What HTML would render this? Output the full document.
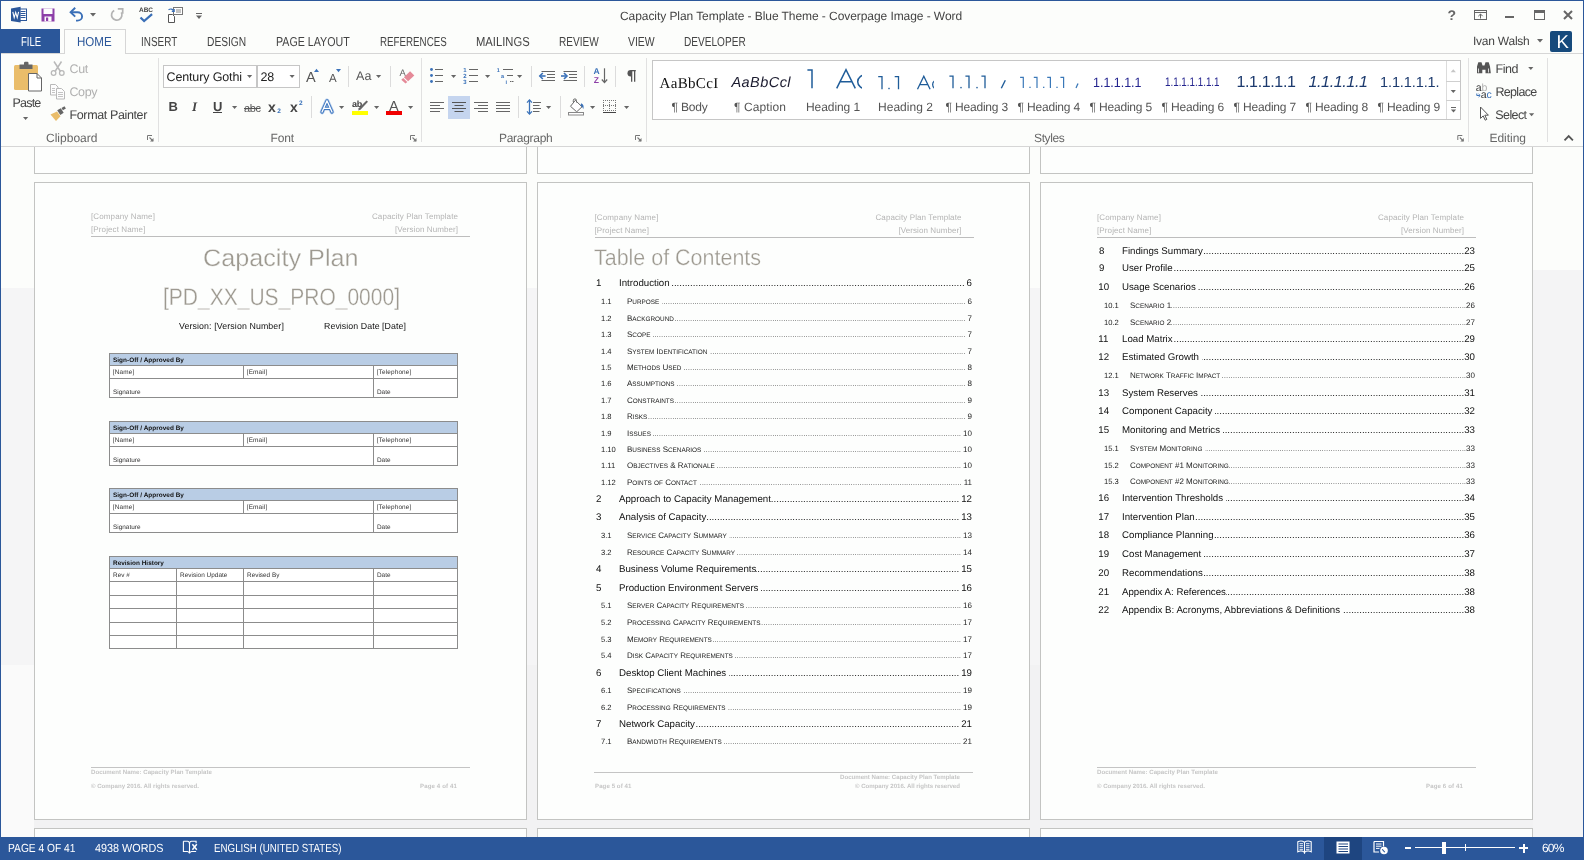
<!DOCTYPE html>
<html><head><meta charset="utf-8"><title>Capacity Plan Template - Word</title><style>
html,body{margin:0;padding:0;}
body{width:1584px;height:860px;overflow:hidden;background:#fcfdfb;font-family:"Liberation Sans",sans-serif;position:relative;}
.t{position:absolute;white-space:nowrap;font-family:"Liberation Sans",sans-serif;}
.r{position:absolute;}
#all{position:absolute;left:0;top:0;width:1584px;height:860px;will-change:transform;text-rendering:geometricPrecision;}
#win{position:absolute;left:0;top:0;width:1584px;height:860px;box-sizing:border-box;border:1px solid #2b579a;border-bottom:none;pointer-events:none;z-index:50;}
#doc{position:absolute;left:0;top:147px;width:1584px;height:690px;background:#fcfdfb;}
</style></head><body>
<div id="all">
<div id="doc"></div>
<div class="r" style="left:0px;top:288px;width:1533px;height:377px;background:#f5f5f6;"></div>
<div class="r" style="left:34px;top:665px;width:1499px;height:172px;background:#f2f2f3;"></div>
<div class="r" style="left:0px;top:665px;width:34px;height:172px;background:#fafafa;"></div>
<div class="r" style="left:1533px;top:270px;width:51px;height:567px;background:#f4f4f5;"></div>
<div class="r" style="left:34px;top:147px;width:493px;height:27px;background:#fdfefd;border:1px solid #c3c4c2;border-top:none;box-sizing:border-box;"></div>
<div class="r" style="left:34px;top:182px;width:493px;height:638px;background:#fdfefd;border:1px solid #c3c4c2;box-sizing:border-box;"></div>
<div class="r" style="left:34px;top:828px;width:493px;height:12px;background:#fdfefd;border:1px solid #c3c4c2;border-bottom:none;box-sizing:border-box;"></div>
<div class="r" style="left:537px;top:147px;width:493px;height:27px;background:#fdfefd;border:1px solid #c3c4c2;border-top:none;box-sizing:border-box;"></div>
<div class="r" style="left:537px;top:182px;width:493px;height:638px;background:#fdfefd;border:1px solid #c3c4c2;box-sizing:border-box;"></div>
<div class="r" style="left:537px;top:828px;width:493px;height:12px;background:#fdfefd;border:1px solid #c3c4c2;border-bottom:none;box-sizing:border-box;"></div>
<div class="r" style="left:1040px;top:147px;width:493px;height:27px;background:#fdfefd;border:1px solid #c3c4c2;border-top:none;box-sizing:border-box;"></div>
<div class="r" style="left:1040px;top:182px;width:493px;height:638px;background:#fdfefd;border:1px solid #c3c4c2;box-sizing:border-box;"></div>
<div class="r" style="left:1040px;top:828px;width:493px;height:12px;background:#fdfefd;border:1px solid #c3c4c2;border-bottom:none;box-sizing:border-box;"></div>
<div class="t" style="left:91px;top:212px;font-size:8px;line-height:10px;color:#b4b4b4;letter-spacing:0.126px;">[Company Name]</div>
<div class="t" style="left:91px;top:225px;font-size:8px;line-height:10px;color:#b4b4b4;letter-spacing:0.114px;">[Project Name]</div>
<div class="t" style="left:372px;top:212px;font-size:8px;line-height:10px;color:#b4b4b4;letter-spacing:0.096px;">Capacity Plan Template</div>
<div class="t" style="left:395px;top:225px;font-size:8px;line-height:10px;color:#b4b4b4;letter-spacing:0.075px;">[Version Number]</div>
<div class="r" style="left:91px;top:236px;width:379px;height:1px;background:#bdbdbd;"></div>
<div class="t" style="left:203px;top:245px;font-size:24px;line-height:28px;color:#9d9990;transform:scaleX(1.0502);transform-origin:0 50%;-webkit-text-stroke:0.3px #fdfefd;">Capacity Plan</div>
<div class="t" style="left:162.5px;top:284px;font-size:24px;line-height:28px;color:#9d9990;transform:scaleX(0.8751);transform-origin:0 50%;-webkit-text-stroke:0.3px #fdfefd;">[PD_XX_US_PRO_0000]</div>
<div class="t" style="left:179px;top:321px;font-size:8.8px;line-height:10px;color:#111;letter-spacing:0.111px;">Version: [Version Number]</div>
<div class="t" style="left:324px;top:321px;font-size:8.8px;line-height:10px;color:#111;letter-spacing:0.065px;">Revision Date [Date]</div>
<div class="r" style="left:109px;top:353px;width:349px;height:45px;background:#fff;border:1px solid #8c8c8c;box-sizing:border-box;"></div>
<div class="r" style="left:110px;top:354px;width:347px;height:11px;background:#b9cde5;"></div>
<div class="r" style="left:110px;top:365px;width:347px;height:1px;background:#8c8c8c;"></div>
<div class="r" style="left:110px;top:378px;width:347px;height:1px;background:#8c8c8c;"></div>
<div class="r" style="left:243px;top:365px;width:1px;height:13px;background:#8c8c8c;"></div>
<div class="r" style="left:373px;top:365px;width:1px;height:32px;background:#8c8c8c;"></div>
<div class="t" style="left:113px;top:357px;font-size:6.4px;line-height:7px;color:#111;letter-spacing:0.038px;font-weight:bold;">Sign-Off / Approved By</div>
<div class="t" style="left:112.7px;top:369px;font-size:6.4px;line-height:7px;color:#333;letter-spacing:0.195px;">[Name]</div>
<div class="t" style="left:246.7px;top:369px;font-size:6.4px;line-height:7px;color:#333;letter-spacing:0.177px;">[Email]</div>
<div class="t" style="left:376.7px;top:369px;font-size:6.4px;line-height:7px;color:#333;letter-spacing:0.155px;">[Telephone]</div>
<div class="t" style="left:113px;top:389px;font-size:6.4px;line-height:7px;color:#333;letter-spacing:0.012px;">Signature</div>
<div class="t" style="left:377px;top:389px;font-size:6.4px;line-height:7px;color:#333;letter-spacing:-0.005px;">Date</div>
<div class="r" style="left:109px;top:421px;width:349px;height:45px;background:#fff;border:1px solid #8c8c8c;box-sizing:border-box;"></div>
<div class="r" style="left:110px;top:422px;width:347px;height:11px;background:#b9cde5;"></div>
<div class="r" style="left:110px;top:433px;width:347px;height:1px;background:#8c8c8c;"></div>
<div class="r" style="left:110px;top:446px;width:347px;height:1px;background:#8c8c8c;"></div>
<div class="r" style="left:243px;top:433px;width:1px;height:13px;background:#8c8c8c;"></div>
<div class="r" style="left:373px;top:433px;width:1px;height:32px;background:#8c8c8c;"></div>
<div class="t" style="left:113px;top:425px;font-size:6.4px;line-height:7px;color:#111;letter-spacing:0.038px;font-weight:bold;">Sign-Off / Approved By</div>
<div class="t" style="left:112.7px;top:437px;font-size:6.4px;line-height:7px;color:#333;letter-spacing:0.195px;">[Name]</div>
<div class="t" style="left:246.7px;top:437px;font-size:6.4px;line-height:7px;color:#333;letter-spacing:0.177px;">[Email]</div>
<div class="t" style="left:376.7px;top:437px;font-size:6.4px;line-height:7px;color:#333;letter-spacing:0.155px;">[Telephone]</div>
<div class="t" style="left:113px;top:457px;font-size:6.4px;line-height:7px;color:#333;letter-spacing:0.012px;">Signature</div>
<div class="t" style="left:377px;top:457px;font-size:6.4px;line-height:7px;color:#333;letter-spacing:-0.005px;">Date</div>
<div class="r" style="left:109px;top:488px;width:349px;height:45px;background:#fff;border:1px solid #8c8c8c;box-sizing:border-box;"></div>
<div class="r" style="left:110px;top:489px;width:347px;height:11px;background:#b9cde5;"></div>
<div class="r" style="left:110px;top:500px;width:347px;height:1px;background:#8c8c8c;"></div>
<div class="r" style="left:110px;top:513px;width:347px;height:1px;background:#8c8c8c;"></div>
<div class="r" style="left:243px;top:500px;width:1px;height:13px;background:#8c8c8c;"></div>
<div class="r" style="left:373px;top:500px;width:1px;height:32px;background:#8c8c8c;"></div>
<div class="t" style="left:113px;top:492px;font-size:6.4px;line-height:7px;color:#111;letter-spacing:0.038px;font-weight:bold;">Sign-Off / Approved By</div>
<div class="t" style="left:112.7px;top:504px;font-size:6.4px;line-height:7px;color:#333;letter-spacing:0.195px;">[Name]</div>
<div class="t" style="left:246.7px;top:504px;font-size:6.4px;line-height:7px;color:#333;letter-spacing:0.177px;">[Email]</div>
<div class="t" style="left:376.7px;top:504px;font-size:6.4px;line-height:7px;color:#333;letter-spacing:0.155px;">[Telephone]</div>
<div class="t" style="left:113px;top:524px;font-size:6.4px;line-height:7px;color:#333;letter-spacing:0.012px;">Signature</div>
<div class="t" style="left:377px;top:524px;font-size:6.4px;line-height:7px;color:#333;letter-spacing:-0.005px;">Date</div>
<div class="r" style="left:109px;top:556px;width:349px;height:93px;background:#fff;border:1px solid #8c8c8c;box-sizing:border-box;"></div>
<div class="r" style="left:110px;top:557px;width:347px;height:11px;background:#b9cde5;"></div>
<div class="r" style="left:110px;top:568px;width:347px;height:1px;background:#8c8c8c;"></div>
<div class="r" style="left:110px;top:581px;width:347px;height:1px;background:#8c8c8c;"></div>
<div class="r" style="left:110px;top:595px;width:347px;height:1px;background:#8c8c8c;"></div>
<div class="r" style="left:110px;top:608px;width:347px;height:1px;background:#8c8c8c;"></div>
<div class="r" style="left:110px;top:622px;width:347px;height:1px;background:#8c8c8c;"></div>
<div class="r" style="left:110px;top:635px;width:347px;height:1px;background:#8c8c8c;"></div>
<div class="r" style="left:176px;top:569px;width:1px;height:79px;background:#8c8c8c;"></div>
<div class="r" style="left:243px;top:569px;width:1px;height:79px;background:#8c8c8c;"></div>
<div class="r" style="left:373px;top:569px;width:1px;height:79px;background:#8c8c8c;"></div>
<div class="t" style="left:113px;top:560px;font-size:6.4px;line-height:7px;color:#111;letter-spacing:0.031px;font-weight:bold;">Revision History</div>
<div class="t" style="left:113px;top:572px;font-size:6.4px;line-height:7px;color:#333;letter-spacing:0.056px;">Rev #</div>
<div class="t" style="left:180px;top:572px;font-size:6.4px;line-height:7px;color:#333;letter-spacing:0.036px;">Revision Update</div>
<div class="t" style="left:247px;top:572px;font-size:6.4px;line-height:7px;color:#333;letter-spacing:0.013px;">Revised By</div>
<div class="t" style="left:377px;top:572px;font-size:6.4px;line-height:7px;color:#333;letter-spacing:-0.005px;">Date</div>
<div class="r" style="left:91px;top:767px;width:379px;height:1px;background:#c4c4c4;"></div>
<div class="t" style="left:91px;top:769px;font-size:6.1px;line-height:7px;color:#c6c6c6;letter-spacing:0.030px;font-weight:bold;">Document Name: Capacity Plan Template</div>
<div class="t" style="left:91px;top:783px;font-size:6.1px;line-height:7px;color:#c6c6c6;letter-spacing:0.009px;font-weight:bold;">© Company 2016. All rights reserved.</div>
<div class="t" style="left:420px;top:783px;font-size:6.1px;line-height:7px;color:#c6c6c6;letter-spacing:0.117px;font-weight:bold;">Page 4 of 41</div>
<div class="t" style="left:594.5px;top:213px;font-size:8px;line-height:10px;color:#b4b4b4;letter-spacing:0.126px;">[Company Name]</div>
<div class="t" style="left:594.5px;top:226px;font-size:8px;line-height:10px;color:#b4b4b4;letter-spacing:0.114px;">[Project Name]</div>
<div class="t" style="left:875.5px;top:213px;font-size:8px;line-height:10px;color:#b4b4b4;letter-spacing:0.096px;">Capacity Plan Template</div>
<div class="t" style="left:898.5px;top:226px;font-size:8px;line-height:10px;color:#b4b4b4;letter-spacing:0.075px;">[Version Number]</div>
<div class="r" style="left:594.5px;top:237px;width:379px;height:1px;background:#bdbdbd;"></div>
<div class="t" style="left:594px;top:245px;font-size:22.5px;line-height:26px;color:#9d9990;transform:scaleX(0.9537);transform-origin:0 50%;-webkit-text-stroke:0.3px #fdfefd;">Table of Contents</div>
<div class="t" style="left:596px;top:278px;font-size:9.7px;line-height:11px;color:#111;">1</div>
<div class="r" style="left:619px;top:278px;width:353px;height:11px;display:flex;font-size:9.7px;line-height:11px;color:#111;"><span style="white-space:pre;flex:none;">Introduction </span><span style="flex:1;overflow:hidden;white-space:nowrap;direction:rtl;text-align:right;">........................................................................................................................................................................................................</span><span style="flex:none;margin-left:2px;">6</span></div>
<div class="t" style="left:601px;top:297px;font-size:7.6px;line-height:9px;color:#222;">1.1</div>
<div class="r" style="left:627px;top:297px;width:345px;height:9px;display:flex;font-size:8px;line-height:9px;color:#222;"><span style="white-space:pre;flex:none;">P<span style="font-size:6.4px;">URPOSE</span> </span><span style="flex:1;overflow:hidden;white-space:nowrap;direction:rtl;text-align:right;color:#555;">....................................................................................................................................................................................................................................................................</span><span style="flex:none;color:#222;margin-left:2px;">6</span></div>
<div class="t" style="left:601px;top:314px;font-size:7.6px;line-height:9px;color:#222;">1.2</div>
<div class="r" style="left:627px;top:314px;width:345px;height:9px;display:flex;font-size:8px;line-height:9px;color:#222;"><span style="white-space:pre;flex:none;">B<span style="font-size:6.4px;">ACKGROUND</span></span><span style="flex:1;overflow:hidden;white-space:nowrap;direction:rtl;text-align:right;color:#555;">....................................................................................................................................................................................................................................................................</span><span style="flex:none;color:#222;margin-left:2px;">7</span></div>
<div class="t" style="left:601px;top:330px;font-size:7.6px;line-height:9px;color:#222;">1.3</div>
<div class="r" style="left:627px;top:330px;width:345px;height:9px;display:flex;font-size:8px;line-height:9px;color:#222;"><span style="white-space:pre;flex:none;">S<span style="font-size:6.4px;">COPE</span> </span><span style="flex:1;overflow:hidden;white-space:nowrap;direction:rtl;text-align:right;color:#555;">....................................................................................................................................................................................................................................................................</span><span style="flex:none;color:#222;margin-left:2px;">7</span></div>
<div class="t" style="left:601px;top:347px;font-size:7.6px;line-height:9px;color:#222;">1.4</div>
<div class="r" style="left:627px;top:347px;width:345px;height:9px;display:flex;font-size:8px;line-height:9px;color:#222;"><span style="white-space:pre;flex:none;">S<span style="font-size:6.4px;">YSTEM</span> I<span style="font-size:6.4px;">DENTIFICATION</span> </span><span style="flex:1;overflow:hidden;white-space:nowrap;direction:rtl;text-align:right;color:#555;">....................................................................................................................................................................................................................................................................</span><span style="flex:none;color:#222;margin-left:2px;">7</span></div>
<div class="t" style="left:601px;top:363px;font-size:7.6px;line-height:9px;color:#222;">1.5</div>
<div class="r" style="left:627px;top:363px;width:345px;height:9px;display:flex;font-size:8px;line-height:9px;color:#222;"><span style="white-space:pre;flex:none;">M<span style="font-size:6.4px;">ETHODS</span> U<span style="font-size:6.4px;">SED</span> </span><span style="flex:1;overflow:hidden;white-space:nowrap;direction:rtl;text-align:right;color:#555;">....................................................................................................................................................................................................................................................................</span><span style="flex:none;color:#222;margin-left:2px;">8</span></div>
<div class="t" style="left:601px;top:379px;font-size:7.6px;line-height:9px;color:#222;">1.6</div>
<div class="r" style="left:627px;top:379px;width:345px;height:9px;display:flex;font-size:8px;line-height:9px;color:#222;"><span style="white-space:pre;flex:none;">A<span style="font-size:6.4px;">SSUMPTIONS</span> </span><span style="flex:1;overflow:hidden;white-space:nowrap;direction:rtl;text-align:right;color:#555;">....................................................................................................................................................................................................................................................................</span><span style="flex:none;color:#222;margin-left:2px;">8</span></div>
<div class="t" style="left:601px;top:396px;font-size:7.6px;line-height:9px;color:#222;">1.7</div>
<div class="r" style="left:627px;top:396px;width:345px;height:9px;display:flex;font-size:8px;line-height:9px;color:#222;"><span style="white-space:pre;flex:none;">C<span style="font-size:6.4px;">ONSTRAINTS</span></span><span style="flex:1;overflow:hidden;white-space:nowrap;direction:rtl;text-align:right;color:#555;">....................................................................................................................................................................................................................................................................</span><span style="flex:none;color:#222;margin-left:2px;">9</span></div>
<div class="t" style="left:601px;top:412px;font-size:7.6px;line-height:9px;color:#222;">1.8</div>
<div class="r" style="left:627px;top:412px;width:345px;height:9px;display:flex;font-size:8px;line-height:9px;color:#222;"><span style="white-space:pre;flex:none;">R<span style="font-size:6.4px;">ISKS</span></span><span style="flex:1;overflow:hidden;white-space:nowrap;direction:rtl;text-align:right;color:#555;">....................................................................................................................................................................................................................................................................</span><span style="flex:none;color:#222;margin-left:2px;">9</span></div>
<div class="t" style="left:601px;top:429px;font-size:7.6px;line-height:9px;color:#222;">1.9</div>
<div class="r" style="left:627px;top:429px;width:345px;height:9px;display:flex;font-size:8px;line-height:9px;color:#222;"><span style="white-space:pre;flex:none;">I<span style="font-size:6.4px;">SSUES</span> </span><span style="flex:1;overflow:hidden;white-space:nowrap;direction:rtl;text-align:right;color:#555;">....................................................................................................................................................................................................................................................................</span><span style="flex:none;color:#222;margin-left:2px;">10</span></div>
<div class="t" style="left:601px;top:445px;font-size:7.6px;line-height:9px;color:#222;">1.10</div>
<div class="r" style="left:627px;top:445px;width:345px;height:9px;display:flex;font-size:8px;line-height:9px;color:#222;"><span style="white-space:pre;flex:none;">B<span style="font-size:6.4px;">USINESS</span> S<span style="font-size:6.4px;">CENARIOS</span> </span><span style="flex:1;overflow:hidden;white-space:nowrap;direction:rtl;text-align:right;color:#555;">....................................................................................................................................................................................................................................................................</span><span style="flex:none;color:#222;margin-left:2px;">10</span></div>
<div class="t" style="left:601px;top:461px;font-size:7.6px;line-height:9px;color:#222;">1.11</div>
<div class="r" style="left:627px;top:461px;width:345px;height:9px;display:flex;font-size:8px;line-height:9px;color:#222;"><span style="white-space:pre;flex:none;">O<span style="font-size:6.4px;">BJECTIVES</span> &amp; R<span style="font-size:6.4px;">ATIONALE</span> </span><span style="flex:1;overflow:hidden;white-space:nowrap;direction:rtl;text-align:right;color:#555;">....................................................................................................................................................................................................................................................................</span><span style="flex:none;color:#222;margin-left:2px;">10</span></div>
<div class="t" style="left:601px;top:478px;font-size:7.6px;line-height:9px;color:#222;">1.12</div>
<div class="r" style="left:627px;top:478px;width:345px;height:9px;display:flex;font-size:8px;line-height:9px;color:#222;"><span style="white-space:pre;flex:none;">P<span style="font-size:6.4px;">OINTS</span> <span style="font-size:6.4px;">OF</span> C<span style="font-size:6.4px;">ONTACT</span> </span><span style="flex:1;overflow:hidden;white-space:nowrap;direction:rtl;text-align:right;color:#555;">....................................................................................................................................................................................................................................................................</span><span style="flex:none;color:#222;margin-left:2px;">11</span></div>
<div class="t" style="left:596px;top:494px;font-size:9.7px;line-height:11px;color:#111;">2</div>
<div class="r" style="left:619px;top:494px;width:353px;height:11px;display:flex;font-size:9.7px;line-height:11px;color:#111;"><span style="white-space:pre;flex:none;">Approach to Capacity Management</span><span style="flex:1;overflow:hidden;white-space:nowrap;direction:rtl;text-align:right;">........................................................................................................................................................................................................</span><span style="flex:none;margin-left:2px;">12</span></div>
<div class="t" style="left:596px;top:512px;font-size:9.7px;line-height:11px;color:#111;">3</div>
<div class="r" style="left:619px;top:512px;width:353px;height:11px;display:flex;font-size:9.7px;line-height:11px;color:#111;"><span style="white-space:pre;flex:none;">Analysis of Capacity</span><span style="flex:1;overflow:hidden;white-space:nowrap;direction:rtl;text-align:right;">........................................................................................................................................................................................................</span><span style="flex:none;margin-left:2px;">13</span></div>
<div class="t" style="left:601px;top:531px;font-size:7.6px;line-height:9px;color:#222;">3.1</div>
<div class="r" style="left:627px;top:531px;width:345px;height:9px;display:flex;font-size:8px;line-height:9px;color:#222;"><span style="white-space:pre;flex:none;">S<span style="font-size:6.4px;">ERVICE</span> C<span style="font-size:6.4px;">APACITY</span> S<span style="font-size:6.4px;">UMMARY</span> </span><span style="flex:1;overflow:hidden;white-space:nowrap;direction:rtl;text-align:right;color:#555;">....................................................................................................................................................................................................................................................................</span><span style="flex:none;color:#222;margin-left:2px;">13</span></div>
<div class="t" style="left:601px;top:548px;font-size:7.6px;line-height:9px;color:#222;">3.2</div>
<div class="r" style="left:627px;top:548px;width:345px;height:9px;display:flex;font-size:8px;line-height:9px;color:#222;"><span style="white-space:pre;flex:none;">R<span style="font-size:6.4px;">ESOURCE</span> C<span style="font-size:6.4px;">APACITY</span> S<span style="font-size:6.4px;">UMMARY</span> </span><span style="flex:1;overflow:hidden;white-space:nowrap;direction:rtl;text-align:right;color:#555;">....................................................................................................................................................................................................................................................................</span><span style="flex:none;color:#222;margin-left:2px;">14</span></div>
<div class="t" style="left:596px;top:564px;font-size:9.7px;line-height:11px;color:#111;">4</div>
<div class="r" style="left:619px;top:564px;width:353px;height:11px;display:flex;font-size:9.7px;line-height:11px;color:#111;"><span style="white-space:pre;flex:none;">Business Volume Requirements</span><span style="flex:1;overflow:hidden;white-space:nowrap;direction:rtl;text-align:right;">........................................................................................................................................................................................................</span><span style="flex:none;margin-left:2px;">15</span></div>
<div class="t" style="left:596px;top:583px;font-size:9.7px;line-height:11px;color:#111;">5</div>
<div class="r" style="left:619px;top:583px;width:353px;height:11px;display:flex;font-size:9.7px;line-height:11px;color:#111;"><span style="white-space:pre;flex:none;">Production Environment Servers </span><span style="flex:1;overflow:hidden;white-space:nowrap;direction:rtl;text-align:right;">........................................................................................................................................................................................................</span><span style="flex:none;margin-left:2px;">16</span></div>
<div class="t" style="left:601px;top:601px;font-size:7.6px;line-height:9px;color:#222;">5.1</div>
<div class="r" style="left:627px;top:601px;width:345px;height:9px;display:flex;font-size:8px;line-height:9px;color:#222;"><span style="white-space:pre;flex:none;">S<span style="font-size:6.4px;">ERVER</span> C<span style="font-size:6.4px;">APACITY</span> R<span style="font-size:6.4px;">EQUIREMENTS</span> </span><span style="flex:1;overflow:hidden;white-space:nowrap;direction:rtl;text-align:right;color:#555;">....................................................................................................................................................................................................................................................................</span><span style="flex:none;color:#222;margin-left:2px;">16</span></div>
<div class="t" style="left:601px;top:618px;font-size:7.6px;line-height:9px;color:#222;">5.2</div>
<div class="r" style="left:627px;top:618px;width:345px;height:9px;display:flex;font-size:8px;line-height:9px;color:#222;"><span style="white-space:pre;flex:none;">P<span style="font-size:6.4px;">ROCESSING</span> C<span style="font-size:6.4px;">APACITY</span> R<span style="font-size:6.4px;">EQUIREMENTS</span></span><span style="flex:1;overflow:hidden;white-space:nowrap;direction:rtl;text-align:right;color:#555;">....................................................................................................................................................................................................................................................................</span><span style="flex:none;color:#222;margin-left:2px;">17</span></div>
<div class="t" style="left:601px;top:635px;font-size:7.6px;line-height:9px;color:#222;">5.3</div>
<div class="r" style="left:627px;top:635px;width:345px;height:9px;display:flex;font-size:8px;line-height:9px;color:#222;"><span style="white-space:pre;flex:none;">M<span style="font-size:6.4px;">EMORY</span> R<span style="font-size:6.4px;">EQUIREMENTS</span></span><span style="flex:1;overflow:hidden;white-space:nowrap;direction:rtl;text-align:right;color:#555;">....................................................................................................................................................................................................................................................................</span><span style="flex:none;color:#222;margin-left:2px;">17</span></div>
<div class="t" style="left:601px;top:651px;font-size:7.6px;line-height:9px;color:#222;">5.4</div>
<div class="r" style="left:627px;top:651px;width:345px;height:9px;display:flex;font-size:8px;line-height:9px;color:#222;"><span style="white-space:pre;flex:none;">D<span style="font-size:6.4px;">ISK</span> C<span style="font-size:6.4px;">APACITY</span> R<span style="font-size:6.4px;">EQUIREMENTS</span> </span><span style="flex:1;overflow:hidden;white-space:nowrap;direction:rtl;text-align:right;color:#555;">....................................................................................................................................................................................................................................................................</span><span style="flex:none;color:#222;margin-left:2px;">17</span></div>
<div class="t" style="left:596px;top:668px;font-size:9.7px;line-height:11px;color:#111;">6</div>
<div class="r" style="left:619px;top:668px;width:353px;height:11px;display:flex;font-size:9.7px;line-height:11px;color:#111;"><span style="white-space:pre;flex:none;">Desktop Client Machines </span><span style="flex:1;overflow:hidden;white-space:nowrap;direction:rtl;text-align:right;">........................................................................................................................................................................................................</span><span style="flex:none;margin-left:2px;">19</span></div>
<div class="t" style="left:601px;top:686px;font-size:7.6px;line-height:9px;color:#222;">6.1</div>
<div class="r" style="left:627px;top:686px;width:345px;height:9px;display:flex;font-size:8px;line-height:9px;color:#222;"><span style="white-space:pre;flex:none;">S<span style="font-size:6.4px;">PECIFICATIONS</span> </span><span style="flex:1;overflow:hidden;white-space:nowrap;direction:rtl;text-align:right;color:#555;">....................................................................................................................................................................................................................................................................</span><span style="flex:none;color:#222;margin-left:2px;">19</span></div>
<div class="t" style="left:601px;top:703px;font-size:7.6px;line-height:9px;color:#222;">6.2</div>
<div class="r" style="left:627px;top:703px;width:345px;height:9px;display:flex;font-size:8px;line-height:9px;color:#222;"><span style="white-space:pre;flex:none;">P<span style="font-size:6.4px;">ROCESSING</span> R<span style="font-size:6.4px;">EQUIREMENTS</span> </span><span style="flex:1;overflow:hidden;white-space:nowrap;direction:rtl;text-align:right;color:#555;">....................................................................................................................................................................................................................................................................</span><span style="flex:none;color:#222;margin-left:2px;">19</span></div>
<div class="t" style="left:596px;top:719px;font-size:9.7px;line-height:11px;color:#111;">7</div>
<div class="r" style="left:619px;top:719px;width:353px;height:11px;display:flex;font-size:9.7px;line-height:11px;color:#111;"><span style="white-space:pre;flex:none;">Network Capacity</span><span style="flex:1;overflow:hidden;white-space:nowrap;direction:rtl;text-align:right;">........................................................................................................................................................................................................</span><span style="flex:none;margin-left:2px;">21</span></div>
<div class="t" style="left:601px;top:737px;font-size:7.6px;line-height:9px;color:#222;">7.1</div>
<div class="r" style="left:627px;top:737px;width:345px;height:9px;display:flex;font-size:8px;line-height:9px;color:#222;"><span style="white-space:pre;flex:none;">B<span style="font-size:6.4px;">ANDWIDTH</span> R<span style="font-size:6.4px;">EQUIREMENTS</span> </span><span style="flex:1;overflow:hidden;white-space:nowrap;direction:rtl;text-align:right;color:#555;">....................................................................................................................................................................................................................................................................</span><span style="flex:none;color:#222;margin-left:2px;">21</span></div>
<div class="r" style="left:594px;top:772px;width:379px;height:1px;background:#c4c4c4;"></div>
<div class="t" style="left:840px;top:774px;font-size:6.1px;line-height:7px;color:#c6c6c6;letter-spacing:0.003px;font-weight:bold;">Document Name: Capacity Plan Template</div>
<div class="t" style="left:595px;top:783px;font-size:6.1px;line-height:7px;color:#c6c6c6;letter-spacing:0.075px;font-weight:bold;">Page 5 of 41</div>
<div class="t" style="left:855px;top:783px;font-size:6.1px;line-height:7px;color:#c6c6c6;letter-spacing:-0.028px;font-weight:bold;">© Company 2016. All rights reserved</div>
<div class="t" style="left:1097px;top:213px;font-size:8px;line-height:10px;color:#b4b4b4;letter-spacing:0.126px;">[Company Name]</div>
<div class="t" style="left:1097px;top:226px;font-size:8px;line-height:10px;color:#b4b4b4;letter-spacing:0.114px;">[Project Name]</div>
<div class="t" style="left:1378px;top:213px;font-size:8px;line-height:10px;color:#b4b4b4;letter-spacing:0.096px;">Capacity Plan Template</div>
<div class="t" style="left:1401px;top:226px;font-size:8px;line-height:10px;color:#b4b4b4;letter-spacing:0.075px;">[Version Number]</div>
<div class="r" style="left:1097px;top:237px;width:379px;height:1px;background:#bdbdbd;"></div>
<div class="t" style="left:1099px;top:246px;font-size:9.7px;line-height:11px;color:#111;">8</div>
<div class="r" style="left:1122px;top:246px;width:353px;height:11px;display:flex;font-size:9.7px;line-height:11px;color:#111;"><span style="white-space:pre;flex:none;">Findings Summary</span><span style="flex:1;overflow:hidden;white-space:nowrap;direction:rtl;text-align:right;">........................................................................................................................................................................................................</span><span style="flex:none;margin-left:0px;">23</span></div>
<div class="t" style="left:1099px;top:263px;font-size:9.7px;line-height:11px;color:#111;">9</div>
<div class="r" style="left:1122px;top:263px;width:353px;height:11px;display:flex;font-size:9.7px;line-height:11px;color:#111;"><span style="white-space:pre;flex:none;">User Profile</span><span style="flex:1;overflow:hidden;white-space:nowrap;direction:rtl;text-align:right;">........................................................................................................................................................................................................</span><span style="flex:none;margin-left:0px;">25</span></div>
<div class="t" style="left:1098.3px;top:282px;font-size:9.7px;line-height:11px;color:#111;">10</div>
<div class="r" style="left:1122px;top:282px;width:353px;height:11px;display:flex;font-size:9.7px;line-height:11px;color:#111;"><span style="white-space:pre;flex:none;">Usage Scenarios </span><span style="flex:1;overflow:hidden;white-space:nowrap;direction:rtl;text-align:right;">........................................................................................................................................................................................................</span><span style="flex:none;margin-left:0px;">26</span></div>
<div class="t" style="left:1104px;top:301px;font-size:7.6px;line-height:9px;color:#222;">10.1</div>
<div class="r" style="left:1130px;top:301px;width:345px;height:9px;display:flex;font-size:8px;line-height:9px;color:#222;"><span style="white-space:pre;flex:none;">S<span style="font-size:6.4px;">CENARIO</span> 1</span><span style="flex:1;overflow:hidden;white-space:nowrap;direction:rtl;text-align:right;color:#555;">....................................................................................................................................................................................................................................................................</span><span style="flex:none;color:#222;margin-left:0px;">26</span></div>
<div class="t" style="left:1104px;top:318px;font-size:7.6px;line-height:9px;color:#222;">10.2</div>
<div class="r" style="left:1130px;top:318px;width:345px;height:9px;display:flex;font-size:8px;line-height:9px;color:#222;"><span style="white-space:pre;flex:none;">S<span style="font-size:6.4px;">CENARIO</span> 2</span><span style="flex:1;overflow:hidden;white-space:nowrap;direction:rtl;text-align:right;color:#555;">....................................................................................................................................................................................................................................................................</span><span style="flex:none;color:#222;margin-left:0px;">27</span></div>
<div class="t" style="left:1098.3px;top:334px;font-size:9.7px;line-height:11px;color:#111;">11</div>
<div class="r" style="left:1122px;top:334px;width:353px;height:11px;display:flex;font-size:9.7px;line-height:11px;color:#111;"><span style="white-space:pre;flex:none;">Load Matrix</span><span style="flex:1;overflow:hidden;white-space:nowrap;direction:rtl;text-align:right;">........................................................................................................................................................................................................</span><span style="flex:none;margin-left:0px;">29</span></div>
<div class="t" style="left:1098.3px;top:352px;font-size:9.7px;line-height:11px;color:#111;">12</div>
<div class="r" style="left:1122px;top:352px;width:353px;height:11px;display:flex;font-size:9.7px;line-height:11px;color:#111;"><span style="white-space:pre;flex:none;">Estimated Growth </span><span style="flex:1;overflow:hidden;white-space:nowrap;direction:rtl;text-align:right;">........................................................................................................................................................................................................</span><span style="flex:none;margin-left:0px;">30</span></div>
<div class="t" style="left:1104px;top:371px;font-size:7.6px;line-height:9px;color:#222;">12.1</div>
<div class="r" style="left:1130px;top:371px;width:345px;height:9px;display:flex;font-size:8px;line-height:9px;color:#222;"><span style="white-space:pre;flex:none;">N<span style="font-size:6.4px;">ETWORK</span> T<span style="font-size:6.4px;">RAFFIC</span> I<span style="font-size:6.4px;">MPACT</span> </span><span style="flex:1;overflow:hidden;white-space:nowrap;direction:rtl;text-align:right;color:#555;">....................................................................................................................................................................................................................................................................</span><span style="flex:none;color:#222;margin-left:0px;">30</span></div>
<div class="t" style="left:1098.3px;top:388px;font-size:9.7px;line-height:11px;color:#111;">13</div>
<div class="r" style="left:1122px;top:388px;width:353px;height:11px;display:flex;font-size:9.7px;line-height:11px;color:#111;"><span style="white-space:pre;flex:none;">System Reserves </span><span style="flex:1;overflow:hidden;white-space:nowrap;direction:rtl;text-align:right;">........................................................................................................................................................................................................</span><span style="flex:none;margin-left:0px;">31</span></div>
<div class="t" style="left:1098.3px;top:406px;font-size:9.7px;line-height:11px;color:#111;">14</div>
<div class="r" style="left:1122px;top:406px;width:353px;height:11px;display:flex;font-size:9.7px;line-height:11px;color:#111;"><span style="white-space:pre;flex:none;">Component Capacity </span><span style="flex:1;overflow:hidden;white-space:nowrap;direction:rtl;text-align:right;">........................................................................................................................................................................................................</span><span style="flex:none;margin-left:0px;">32</span></div>
<div class="t" style="left:1098.3px;top:425px;font-size:9.7px;line-height:11px;color:#111;">15</div>
<div class="r" style="left:1122px;top:425px;width:353px;height:11px;display:flex;font-size:9.7px;line-height:11px;color:#111;"><span style="white-space:pre;flex:none;">Monitoring and Metrics </span><span style="flex:1;overflow:hidden;white-space:nowrap;direction:rtl;text-align:right;">........................................................................................................................................................................................................</span><span style="flex:none;margin-left:0px;">33</span></div>
<div class="t" style="left:1104px;top:444px;font-size:7.6px;line-height:9px;color:#222;">15.1</div>
<div class="r" style="left:1130px;top:444px;width:345px;height:9px;display:flex;font-size:8px;line-height:9px;color:#222;"><span style="white-space:pre;flex:none;">S<span style="font-size:6.4px;">YSTEM</span> M<span style="font-size:6.4px;">ONITORING</span> </span><span style="flex:1;overflow:hidden;white-space:nowrap;direction:rtl;text-align:right;color:#555;">....................................................................................................................................................................................................................................................................</span><span style="flex:none;color:#222;margin-left:0px;">33</span></div>
<div class="t" style="left:1104px;top:461px;font-size:7.6px;line-height:9px;color:#222;">15.2</div>
<div class="r" style="left:1130px;top:461px;width:345px;height:9px;display:flex;font-size:8px;line-height:9px;color:#222;"><span style="white-space:pre;flex:none;">C<span style="font-size:6.4px;">OMPONENT</span> #1 M<span style="font-size:6.4px;">ONITORING</span></span><span style="flex:1;overflow:hidden;white-space:nowrap;direction:rtl;text-align:right;color:#555;">....................................................................................................................................................................................................................................................................</span><span style="flex:none;color:#222;margin-left:0px;">33</span></div>
<div class="t" style="left:1104px;top:477px;font-size:7.6px;line-height:9px;color:#222;">15.3</div>
<div class="r" style="left:1130px;top:477px;width:345px;height:9px;display:flex;font-size:8px;line-height:9px;color:#222;"><span style="white-space:pre;flex:none;">C<span style="font-size:6.4px;">OMPONENT</span> #2 M<span style="font-size:6.4px;">ONITORING</span></span><span style="flex:1;overflow:hidden;white-space:nowrap;direction:rtl;text-align:right;color:#555;">....................................................................................................................................................................................................................................................................</span><span style="flex:none;color:#222;margin-left:0px;">33</span></div>
<div class="t" style="left:1098.3px;top:493px;font-size:9.7px;line-height:11px;color:#111;">16</div>
<div class="r" style="left:1122px;top:493px;width:353px;height:11px;display:flex;font-size:9.7px;line-height:11px;color:#111;"><span style="white-space:pre;flex:none;">Intervention Thresholds </span><span style="flex:1;overflow:hidden;white-space:nowrap;direction:rtl;text-align:right;">........................................................................................................................................................................................................</span><span style="flex:none;margin-left:0px;">34</span></div>
<div class="t" style="left:1098.3px;top:512px;font-size:9.7px;line-height:11px;color:#111;">17</div>
<div class="r" style="left:1122px;top:512px;width:353px;height:11px;display:flex;font-size:9.7px;line-height:11px;color:#111;"><span style="white-space:pre;flex:none;">Intervention Plan</span><span style="flex:1;overflow:hidden;white-space:nowrap;direction:rtl;text-align:right;">........................................................................................................................................................................................................</span><span style="flex:none;margin-left:0px;">35</span></div>
<div class="t" style="left:1098.3px;top:530px;font-size:9.7px;line-height:11px;color:#111;">18</div>
<div class="r" style="left:1122px;top:530px;width:353px;height:11px;display:flex;font-size:9.7px;line-height:11px;color:#111;"><span style="white-space:pre;flex:none;">Compliance Planning</span><span style="flex:1;overflow:hidden;white-space:nowrap;direction:rtl;text-align:right;">........................................................................................................................................................................................................</span><span style="flex:none;margin-left:0px;">36</span></div>
<div class="t" style="left:1098.3px;top:549px;font-size:9.7px;line-height:11px;color:#111;">19</div>
<div class="r" style="left:1122px;top:549px;width:353px;height:11px;display:flex;font-size:9.7px;line-height:11px;color:#111;"><span style="white-space:pre;flex:none;">Cost Management </span><span style="flex:1;overflow:hidden;white-space:nowrap;direction:rtl;text-align:right;">........................................................................................................................................................................................................</span><span style="flex:none;margin-left:0px;">37</span></div>
<div class="t" style="left:1098.3px;top:568px;font-size:9.7px;line-height:11px;color:#111;">20</div>
<div class="r" style="left:1122px;top:568px;width:353px;height:11px;display:flex;font-size:9.7px;line-height:11px;color:#111;"><span style="white-space:pre;flex:none;">Recommendations</span><span style="flex:1;overflow:hidden;white-space:nowrap;direction:rtl;text-align:right;">........................................................................................................................................................................................................</span><span style="flex:none;margin-left:0px;">38</span></div>
<div class="t" style="left:1098.3px;top:587px;font-size:9.7px;line-height:11px;color:#111;">21</div>
<div class="r" style="left:1122px;top:587px;width:353px;height:11px;display:flex;font-size:9.7px;line-height:11px;color:#111;"><span style="white-space:pre;flex:none;">Appendix A: References</span><span style="flex:1;overflow:hidden;white-space:nowrap;direction:rtl;text-align:right;">........................................................................................................................................................................................................</span><span style="flex:none;margin-left:0px;">38</span></div>
<div class="t" style="left:1098.3px;top:605px;font-size:9.7px;line-height:11px;color:#111;">22</div>
<div class="r" style="left:1122px;top:605px;width:353px;height:11px;display:flex;font-size:9.7px;line-height:11px;color:#111;"><span style="white-space:pre;flex:none;">Appendix B: Acronyms, Abbreviations &amp; Definitions </span><span style="flex:1;overflow:hidden;white-space:nowrap;direction:rtl;text-align:right;">........................................................................................................................................................................................................</span><span style="flex:none;margin-left:0px;">38</span></div>
<div class="r" style="left:1097px;top:767px;width:379px;height:1px;background:#c4c4c4;"></div>
<div class="t" style="left:1097px;top:769px;font-size:6.1px;line-height:7px;color:#c6c6c6;letter-spacing:0.030px;font-weight:bold;">Document Name: Capacity Plan Template</div>
<div class="t" style="left:1097px;top:783px;font-size:6.1px;line-height:7px;color:#c6c6c6;letter-spacing:0.009px;font-weight:bold;">© Company 2016. All rights reserved.</div>
<div class="t" style="left:1426px;top:783px;font-size:6.1px;line-height:7px;color:#c6c6c6;letter-spacing:0.117px;font-weight:bold;">Page 6 of 41</div>
<div class="t" style="left:620px;top:8px;font-size:12px;line-height:16px;color:#444444;letter-spacing:-0.069px;">Capacity Plan Template - Blue Theme - Coverpage Image - Word</div>
<svg class="r" style="left:10px;top:6px;" width="19" height="18" viewBox="0 0 19 18">
      <rect x="7" y="3" width="9.5" height="11.5" fill="#fff" stroke="#2b579a" stroke-width="1"/>
      <path d="M10.5 5.5h5M10.5 7.5h5M10.5 9.5h5M10.5 11.5h5" stroke="#2b579a" stroke-width="1"/>
      <path d="M1 2.4 L10.6 0.8 V16.6 L1 15Z" fill="#2b579a"/>
      <path d="M2.8 5.8l1.4 5.8 1.5-5.2 1.5 5.2 1.4-5.800" fill="none" stroke="#fff" stroke-width="1.1"/></svg>
<svg class="r" style="left:41px;top:8.3px;" width="14" height="14" viewBox="0 0 14 14"><path d="M0.5 0.5h13v13h-13z" fill="#8d3fa8"/><rect x="2.5" y="0.5" width="9" height="5.5" fill="#fdfdfd"/><rect x="3.5" y="8.5" width="7" height="5" fill="#fdfdfd"/><rect x="5" y="9.5" width="2.2" height="3.5" fill="#8d3fa8"/></svg>
<svg class="r" style="left:69px;top:7px;" width="17" height="15" viewBox="0 0 17 15"><path d="M2 5.2h6.5a4.6 4.2 0 0 1 0 8.4h-1.5" fill="none" stroke="#3a6fb7" stroke-width="1.9"/><path d="M6.2 0.8L1.6 5.2l4.6 4.4" fill="none" stroke="#3a6fb7" stroke-width="1.9"/></svg>
<svg class="r" style="left:90px;top:13px;" width="6" height="4" viewBox="0 0 6 4"><path d="M0 0h6l-3 3.5z" fill="#666"/></svg>
<svg class="r" style="left:109px;top:7px;" width="16" height="16" viewBox="0 0 16 16"><path d="M5.2 3.4A5.200 5.200 0 1 0 12.300 5.400" fill="none" stroke="#b4b4b4" stroke-width="1.7"/><path d="M8.800 1.800H13.700V6.800" fill="none" stroke="#b4b4b4" stroke-width="1.7"/></svg>
<div class="t" style="left:139px;top:7px;font-size:6.5px;line-height:8px;color:#444;letter-spacing:-0.028px;font-weight:bold;">ABC</div>
<svg class="r" style="left:139px;top:13px;" width="15" height="10" viewBox="0 0 15 10"><path d="M1.5 4.5l3.6 3.6 8-7" fill="none" stroke="#3a6fb7" stroke-width="2.2"/></svg>
<svg class="r" style="left:166px;top:6px;" width="18" height="18" viewBox="0 0 18 18"><rect x="7.5" y="1.5" width="9" height="7" fill="#fff" stroke="#777" stroke-width="1"/><path d="M10 4h5M10 6h5" stroke="#888" stroke-width="1"/>
       <path d="M2.5 8.5h4l2 2v6h-6z" fill="#fff" stroke="#555" stroke-width="1"/><path d="M2.5 3.8c2-1.3 4-1 5 0.8" fill="none" stroke="#3a6fb7" stroke-width="1.2"/><path d="M5.8 5.4h2.4v-2.4" fill="none" stroke="#3a6fb7" stroke-width="1.2"/></svg>
<svg class="r" style="left:195px;top:12.5px;" width="8" height="7" viewBox="0 0 8 7"><path d="M1 0.5h6" stroke="#666" stroke-width="1"/><path d="M1 2.5h6l-3 3.5z" fill="#666"/></svg>
<div class="t" style="left:1447.5px;top:6px;font-size:14px;line-height:18px;color:#666;font-weight:bold;">?</div>
<svg class="r" style="left:1474px;top:10px;" width="14" height="12" viewBox="0 0 14 12"><rect x="0.5" y="0.5" width="12" height="9" fill="none" stroke="#666"/><path d="M0.5 2.5h12" stroke="#666"/><path d="M6.5 8.500v-4.500M4.300 6.200l2.200-2.200 2.200 2.200" fill="none" stroke="#666" stroke-width="1"/></svg>
<div class="r" style="left:1505px;top:16px;width:9px;height:2px;background:#666;"></div>
<svg class="r" style="left:1534px;top:10px;" width="11" height="10" viewBox="0 0 11 10"><rect x="0.5" y="0.5" width="10" height="9" fill="none" stroke="#666"/><rect x="0" y="0" width="11" height="3" fill="#666"/></svg>
<svg class="r" style="left:1563px;top:10.3px;" width="10" height="10" viewBox="0 0 10 10"><path d="M1 1l8 8M9 1l-8 8" stroke="#666" stroke-width="2"/></svg>
<div class="r" style="left:1px;top:29px;width:59px;height:25px;background:#2b579a;"></div>
<div class="t" style="left:20.8px;top:33px;font-size:13px;line-height:17px;color:#fff;transform:scaleX(0.7358);transform-origin:0 50%;">FILE</div>
<div class="r" style="left:0px;top:53px;width:1584px;height:1px;background:#d6d6d6;"></div>
<div class="r" style="left:64px;top:29px;width:62px;height:25px;background:#fcfdfb;border:1px solid #d6d6d6;border-bottom:none;box-sizing:border-box;"></div>
<div class="t" style="left:77.3px;top:33px;font-size:13px;line-height:17px;color:#2b579a;transform:scaleX(0.8897);transform-origin:0 50%;">HOME</div>
<div class="t" style="left:141.3px;top:33px;font-size:13px;line-height:17px;color:#444444;transform:scaleX(0.7631);transform-origin:0 50%;">INSERT</div>
<div class="t" style="left:207.3px;top:33px;font-size:13px;line-height:17px;color:#444444;transform:scaleX(0.7865);transform-origin:0 50%;">DESIGN</div>
<div class="t" style="left:276.3px;top:33px;font-size:13px;line-height:17px;color:#444444;transform:scaleX(0.8205);transform-origin:0 50%;">PAGE LAYOUT</div>
<div class="t" style="left:380.3px;top:33px;font-size:13px;line-height:17px;color:#444444;transform:scaleX(0.7507);transform-origin:0 50%;">REFERENCES</div>
<div class="t" style="left:476.3px;top:33px;font-size:13px;line-height:17px;color:#444444;transform:scaleX(0.8644);transform-origin:0 50%;">MAILINGS</div>
<div class="t" style="left:559.3px;top:33px;font-size:13px;line-height:17px;color:#444444;transform:scaleX(0.7741);transform-origin:0 50%;">REVIEW</div>
<div class="t" style="left:628.3px;top:33px;font-size:13px;line-height:17px;color:#444444;transform:scaleX(0.8036);transform-origin:0 50%;">VIEW</div>
<div class="t" style="left:684.3px;top:33px;font-size:13px;line-height:17px;color:#444444;transform:scaleX(0.7763);transform-origin:0 50%;">DEVELOPER</div>
<div class="t" style="left:1473px;top:33px;font-size:12px;line-height:16px;color:#444444;letter-spacing:-0.241px;">Ivan Walsh</div>
<svg class="r" style="left:1536.5px;top:38.5px;" width="7" height="4" viewBox="0 0 7 4"><path d="M0 0h6l-3 3.5z" fill="#666"/></svg>
<div class="r" style="left:1550px;top:31px;width:22px;height:21px;background:#164a7c;border-radius:2px;"></div>
<div class="t" style="left:1556.5px;top:31px;font-size:18.5px;line-height:22px;color:#fff;">K</div>
<div class="r" style="left:0px;top:146px;width:1584px;height:1px;background:#d6d6d6;"></div>
<div class="r" style="left:158px;top:58px;width:1px;height:84px;background:#e1e1e1;"></div>
<div class="r" style="left:421px;top:58px;width:1px;height:84px;background:#e1e1e1;"></div>
<div class="r" style="left:646px;top:58px;width:1px;height:84px;background:#e1e1e1;"></div>
<div class="r" style="left:1468px;top:58px;width:1px;height:84px;background:#e1e1e1;"></div>
<div class="r" style="left:1547px;top:58px;width:1px;height:84px;background:#e1e1e1;"></div>
<div class="t" style="left:46px;top:130px;font-size:12px;line-height:16px;color:#666;letter-spacing:0.016px;">Clipboard</div>
<div class="t" style="left:270.5px;top:130px;font-size:12px;line-height:16px;color:#666;letter-spacing:-0.127px;">Font</div>
<div class="t" style="left:499px;top:130px;font-size:12px;line-height:16px;color:#666;letter-spacing:-0.282px;">Paragraph</div>
<div class="t" style="left:1034px;top:130px;font-size:12px;line-height:16px;color:#666;letter-spacing:-0.363px;">Styles</div>
<div class="t" style="left:1489.5px;top:130px;font-size:12px;line-height:16px;color:#666;letter-spacing:-0.027px;">Editing</div>
<div class="t" style="left:12.5px;top:95px;font-size:12.5px;line-height:16px;color:#444444;letter-spacing:-0.793px;">Paste</div>
<div class="t" style="left:69.5px;top:61px;font-size:12.5px;line-height:16px;color:#b0b0b0;letter-spacing:-0.317px;">Cut</div>
<div class="t" style="left:69.5px;top:84px;font-size:12.5px;line-height:16px;color:#b0b0b0;letter-spacing:-0.420px;">Copy</div>
<div class="t" style="left:69.5px;top:107px;font-size:12.5px;line-height:16px;color:#444444;letter-spacing:-0.369px;">Format Painter</div>
<div class="r" style="left:163px;top:65px;width:94px;height:23px;background:#fff;border:1px solid #c6c6c6;box-sizing:border-box;"></div>
<div class="r" style="left:257px;top:65px;width:43px;height:23px;background:#fff;border:1px solid #c6c6c6;box-sizing:border-box;"></div>
<div class="r" style="left:166px;top:66px;width:76px;height:21px;overflow:hidden;"><div class="t" style="left:0.5px;top:3px;font-size:12.5px;line-height:16px;color:#222;letter-spacing:-0.133px;">Century Gothic</div></div>
<div class="t" style="left:260.5px;top:69px;font-size:12.5px;line-height:16px;color:#222;letter-spacing:-0.201px;">28</div>
<div class="t" style="left:306px;top:70px;font-size:14.5px;line-height:16px;color:#555;">A</div>
<div class="t" style="left:329px;top:72px;font-size:11.5px;line-height:15px;color:#555;">A</div>
<div class="r" style="left:348px;top:66px;width:1px;height:21px;background:#dcdcdc;"></div>
<div class="t" style="left:356px;top:68px;font-size:12.5px;line-height:16px;color:#555;letter-spacing:0.105px;">Aa</div>
<div class="r" style="left:390px;top:66px;width:1px;height:21px;background:#dcdcdc;"></div>
<div class="t" style="left:399.5px;top:68px;font-size:9.5px;line-height:11px;color:#666;">A</div>
<div class="t" style="left:168.5px;top:98px;font-size:13px;line-height:17px;color:#444;font-weight:bold;">B</div>
<div class="t" style="left:192px;top:98px;font-size:13px;line-height:17px;color:#444;font-family:'Liberation Serif',serif;font-weight:bold;font-style:italic;">I</div>
<div class="t" style="left:213px;top:98px;font-size:13px;line-height:17px;color:#444;font-weight:bold;">U</div>
<div class="t" style="left:244px;top:102px;font-size:11px;line-height:14px;color:#555;letter-spacing:-0.411px;text-decoration:line-through;">abc</div>
<div class="t" style="left:268px;top:98px;font-size:14px;line-height:18px;color:#444;font-weight:bold;">x</div>
<div class="t" style="left:277.3px;top:108px;font-size:6.5px;line-height:8px;color:#3b72b9;font-weight:bold;">2</div>
<div class="t" style="left:290px;top:98px;font-size:14px;line-height:18px;color:#444;font-weight:bold;">x</div>
<div class="t" style="left:299px;top:100px;font-size:6.5px;line-height:8px;color:#3b72b9;font-weight:bold;">2</div>
<div class="r" style="left:311px;top:96px;width:1px;height:22px;background:#dcdcdc;"></div>
<div class="t" style="left:352px;top:99px;font-size:9px;line-height:10px;color:#444;letter-spacing:-0.251px;font-weight:bold;">ab</div>
<div class="r" style="left:352px;top:111px;width:16px;height:4px;background:#ffff00;"></div>
<div class="t" style="left:389px;top:99px;font-size:14.5px;line-height:16px;color:#555;">A</div>
<div class="r" style="left:386px;top:111px;width:16px;height:4px;background:#f00000;"></div>
<div class="r" style="left:531px;top:66px;width:1px;height:21px;background:#dcdcdc;"></div>
<div class="r" style="left:584px;top:66px;width:1px;height:21px;background:#dcdcdc;"></div>
<div class="t" style="left:593.5px;top:67px;font-size:8.5px;line-height:9px;color:#3b72b9;font-weight:bold;">A</div>
<div class="t" style="left:593.8px;top:76px;font-size:8.5px;line-height:9px;color:#8d3fa8;font-weight:bold;">Z</div>
<div class="r" style="left:615px;top:66px;width:1px;height:21px;background:#dcdcdc;"></div>
<div class="r" style="left:448px;top:96px;width:22px;height:23px;background:#c5d5ef;"></div>
<div class="r" style="left:518px;top:96px;width:1px;height:22px;background:#dcdcdc;"></div>
<div class="r" style="left:560px;top:96px;width:1px;height:22px;background:#dcdcdc;"></div>
<div class="r" style="left:652px;top:60px;width:809px;height:60px;background:#fff;border:1px solid #c6c6c6;box-sizing:border-box;"></div>
<div class="r" style="left:1446px;top:61px;width:1px;height:58px;background:#dcdcdc;"></div>
<div class="r" style="left:1446px;top:81px;width:14px;height:1px;background:#cfcfcf;"></div>
<div class="r" style="left:1446px;top:100px;width:14px;height:1px;background:#cfcfcf;"></div>
<div class="t" style="left:659.5px;top:75px;font-size:15px;line-height:18px;color:#111;letter-spacing:0.335px;font-family:'Liberation Serif',serif;">AaBbCcI</div>
<div class="t" style="left:671.5px;top:99px;font-size:12px;line-height:16px;color:#555;letter-spacing:-0.188px;">¶ Body</div>
<div class="t" style="left:731.5px;top:74px;font-size:14.5px;line-height:18px;color:#1a1a2e;letter-spacing:0.441px;font-style:italic;">AaBbCcl</div>
<div class="t" style="left:734px;top:99px;font-size:12px;line-height:16px;color:#555;letter-spacing:0.096px;">¶ Caption</div>
<div class="t" style="left:806px;top:99px;font-size:12px;line-height:16px;color:#555;letter-spacing:-0.078px;">Heading 1</div>
<div class="t" style="left:878px;top:99px;font-size:12px;line-height:16px;color:#555;letter-spacing:0.033px;">Heading 2</div>
<div class="t" style="left:945.5px;top:99px;font-size:12px;line-height:16px;color:#555;letter-spacing:-0.180px;">¶ Heading 3</div>
<div class="t" style="left:1017.5px;top:99px;font-size:12px;line-height:16px;color:#555;letter-spacing:-0.180px;">¶ Heading 4</div>
<div class="t" style="left:1092.5px;top:74px;font-size:13.5px;line-height:18px;color:#23238e;transform:scaleX(0.9231);transform-origin:0 50%;">1.1.1.1.1</div>
<div class="t" style="left:1089.5px;top:99px;font-size:12px;line-height:16px;color:#555;letter-spacing:-0.180px;">¶ Heading 5</div>
<div class="t" style="left:1164.5px;top:74px;font-size:12.5px;line-height:16px;color:#23238e;transform:scaleX(0.7842);transform-origin:0 50%;">1.1.1.1.1.1.1</div>
<div class="t" style="left:1161.5px;top:99px;font-size:12px;line-height:16px;color:#555;letter-spacing:-0.180px;">¶ Heading 6</div>
<div class="t" style="left:1236.5px;top:73px;font-size:16px;line-height:20px;color:#1c3a6e;letter-spacing:-0.363px;">1.1.1.1.1</div>
<div class="t" style="left:1233.5px;top:99px;font-size:12px;line-height:16px;color:#555;letter-spacing:-0.180px;">¶ Heading 7</div>
<div class="t" style="left:1308.5px;top:73px;font-size:16px;line-height:20px;color:#1c3a6e;letter-spacing:-0.363px;font-style:italic;">1.1.1.1.1</div>
<div class="t" style="left:1305.5px;top:99px;font-size:12px;line-height:16px;color:#555;letter-spacing:-0.180px;">¶ Heading 8</div>
<div class="t" style="left:1380px;top:74px;font-size:14.5px;line-height:19px;color:#1c3a6e;letter-spacing:-0.096px;">1.1.1.1.1.</div>
<div class="t" style="left:1377.5px;top:99px;font-size:12px;line-height:16px;color:#555;letter-spacing:-0.180px;">¶ Heading 9</div>
<div class="t" style="left:1495.5px;top:61px;font-size:12.5px;line-height:16px;color:#444444;letter-spacing:-0.454px;">Find</div>
<div class="t" style="left:1475.8px;top:83px;font-size:10.5px;line-height:11px;color:#333;">a</div>
<div class="t" style="left:1481.6px;top:83px;font-size:10.5px;line-height:11px;color:#b0b0b0;">b</div>
<div class="t" style="left:1480.8px;top:90px;font-size:10.5px;line-height:11px;color:#333;">a</div>
<div class="t" style="left:1486.6px;top:90px;font-size:10.5px;line-height:11px;color:#3b72b9;">c</div>
<div class="t" style="left:1495.5px;top:84px;font-size:12.5px;line-height:16px;color:#444444;letter-spacing:-0.694px;">Replace</div>
<div class="t" style="left:1495.3px;top:107px;font-size:12.5px;line-height:16px;color:#444444;letter-spacing:-0.590px;">Select</div>
<svg class="r" style="left:0;top:0;" width="1584" height="150" viewBox="0 0 1584 150"><defs><clipPath id="c1"><rect x="855" y="62" width="7" height="34"/></clipPath><clipPath id="c2"><rect x="928" y="62" width="6" height="34"/></clipPath></defs><path d="M147.5 140V135.5H152" fill="none" stroke="#777" stroke-width="1"/><path d="M149.5 137.5L153 141" stroke="#777" stroke-width="1.1"/><path d="M153.5 138V141.5H150Z" fill="#777"/><path d="M410.5 140V135.5H415" fill="none" stroke="#777" stroke-width="1"/><path d="M412.5 137.5L416 141" stroke="#777" stroke-width="1.1"/><path d="M416.5 138V141.5H413Z" fill="#777"/><path d="M635.5 140V135.5H640" fill="none" stroke="#777" stroke-width="1"/><path d="M637.5 137.5L641 141" stroke="#777" stroke-width="1.1"/><path d="M641.5 138V141.5H638Z" fill="#777"/><path d="M1457.8 140V135.5H1462.3" fill="none" stroke="#777" stroke-width="1"/><path d="M1459.8 137.5L1463.3 141" stroke="#777" stroke-width="1.1"/><path d="M1463.8 138V141.5H1460.3Z" fill="#777"/><path d="M1564.5 140.3l4.200-4.200 4.200 4.200" fill="none" stroke="#555" stroke-width="1.8"/><rect x="14" y="65" width="24" height="25" rx="1.5" fill="#eabd6a"/>
       <path d="M19.500 64.500h13v4.500h-13z" fill="#666"/><rect x="24" y="61.800" width="4.500" height="4" rx="1.200" fill="#666"/>
       <path d="M28.500 73.500h8.500l4.500 4.500v13h-13z" fill="#fff" stroke="#666" stroke-width="1"/><path d="M37 73.500v4.500h4.500" fill="none" stroke="#666"/><path d="M23 117h5.2l-2.6 3.100z" fill="#666"/><path d="M54 61.500l6.500 10M61.500 61.500L55 71.500" stroke="#b9b9b9" stroke-width="1.500" fill="none"/><circle cx="53.600" cy="73" r="2.300" fill="none" stroke="#b9b9b9" stroke-width="1.300"/><circle cx="61.800" cy="73" r="2.300" fill="none" stroke="#b9b9b9" stroke-width="1.300"/><path d="M50.500 84.500h5l2.500 2.500v8h-7.500z" fill="#fdfdfd" stroke="#b9b9b9"/><path d="M52 88.500h3M52 90.500h3M52 92.500h3" stroke="#c4c4c4"/><path d="M56.500 88.500h5l3 3v7.500h-8z" fill="#fdfdfd" stroke="#b9b9b9"/><path d="M58 92.500h5M58 94.500h5M58 96.500h5" stroke="#c4c4c4"/><path d="M50.500 114.500l6.500-3 3.500 4.800-4.500 4.700z" fill="#eabd6a"/><path d="M57.200 110.200l3.600-2 2.900 4.600-3.400 2.200z" fill="#666"/><path d="M61.500 108l3-1.800 1.400 2.300-3 1.800z" fill="#666"/><path d="M247 75h5.2l-2.6 3.100z" fill="#666"/><path d="M289.5 75h5.2l-2.6 3.100z" fill="#666"/><path d="M314 72h5l-2.500-3.200z" fill="#3b72b9"/><path d="M336 69h5l-2.500 3.200z" fill="#3b72b9"/><path d="M376 75h5.2l-2.6 3.100z" fill="#666"/><path d="M410.100 71.300l4.200 4.200-6.200 5.800-4.200-4.100z" fill="#e58a98"/><path d="M403.200 77.900l4.100 4-1.800 1.700-4.200-3.900z" fill="#e58a98"/><rect x="213" y="112" width="9" height="1" fill="#444"/><path d="M232 106h5.2l-2.6 3.100z" fill="#666"/><path d="M322 112L327 100.800L332 112M324 108.300H330" fill="none" stroke="#b7cdea" stroke-width="4.600" stroke-linecap="round" stroke-linejoin="round"/><path d="M322 112L327 100.800L332 112M324 108.300H330" fill="none" stroke="#3f78c0" stroke-width="3.200" stroke-linecap="round" stroke-linejoin="round"/><path d="M322 112L327 100.800L332 112M324 108.300H330" fill="none" stroke="#fff" stroke-width="1.300" stroke-linecap="round" stroke-linejoin="round"/><path d="M339 106h5.2l-2.6 3.100z" fill="#666"/><path d="M366.500 100.500l1.500 1.300-7.500 8-2.300 0.600 0.500-2.200z" fill="#666"/><path d="M374 106h5.2l-2.6 3.100z" fill="#666"/><path d="M408 106h5.2l-2.6 3.100z" fill="#666"/><circle cx="431.500" cy="69.5" r="1.450" fill="#3b72b9"/><rect x="435" y="69" width="8" height="1" fill="#666666"/><rect x="469" y="69" width="9" height="1" fill="#666666"/><circle cx="431.500" cy="75.5" r="1.450" fill="#3b72b9"/><rect x="435" y="75" width="8" height="1" fill="#666666"/><rect x="469" y="75" width="9" height="1" fill="#666666"/><circle cx="431.500" cy="81.5" r="1.450" fill="#3b72b9"/><rect x="435" y="81" width="8" height="1" fill="#666666"/><rect x="469" y="81" width="9" height="1" fill="#666666"/><path d="M451 75h5.2l-2.6 3.100z" fill="#666"/><text x="463.300" y="71.6" font-size="6" font-weight="bold" fill="#3b72b9" font-family="Liberation Sans">1</text><text x="463.300" y="77.6" font-size="6" font-weight="bold" fill="#3b72b9" font-family="Liberation Sans">2</text><text x="463.300" y="83.6" font-size="6" font-weight="bold" fill="#3b72b9" font-family="Liberation Sans">3</text><path d="M485 75h5.2l-2.6 3.100z" fill="#666"/><rect x="503" y="69" width="10" height="1" fill="#666666"/><rect x="507" y="75" width="6" height="1" fill="#666666"/><rect x="510" y="81" width="1.5" height="1" fill="#666666"/><rect x="512" y="81" width="1.5" height="1" fill="#666666"/><text x="496.800" y="71.500" font-size="5.500" font-weight="bold" fill="#3b72b9" font-family="Liberation Sans">1</text><text x="501" y="77.500" font-size="5.500" font-weight="bold" fill="#3b72b9" font-family="Liberation Sans">a</text><text x="505.600" y="83.600" font-size="5.500" font-weight="bold" fill="#3b72b9" font-family="Liberation Sans">i</text><path d="M517 75h5.2l-2.6 3.100z" fill="#666"/><rect x="541.5" y="71" width="13.5" height="1" fill="#666666"/><rect x="547" y="74" width="8" height="1" fill="#666666"/><rect x="547" y="77" width="8" height="1" fill="#666666"/><rect x="541.5" y="80" width="13.5" height="1" fill="#666666"/><rect x="563.5" y="71" width="13.5" height="1" fill="#666666"/><rect x="569" y="74" width="8" height="1" fill="#666666"/><rect x="569" y="77" width="8" height="1" fill="#666666"/><rect x="563.5" y="80" width="13.5" height="1" fill="#666666"/><path d="M539.800 76h5.800" stroke="#3b72b9" stroke-width="1.600"/><path d="M542.800 73l-3 3 3 3" fill="none" stroke="#3b72b9" stroke-width="1.600"/><path d="M561 76h5.800" stroke="#3b72b9" stroke-width="1.600"/><path d="M564 73l3 3-3 3" fill="none" stroke="#3b72b9" stroke-width="1.600"/><path d="M604.500 68.300v14" stroke="#666" stroke-width="1.200"/><path d="M601.800 79.500l2.700 3 2.700-3" fill="none" stroke="#666" stroke-width="1.200"/><path d="M631 70h4.700v1.300h-4.700z" fill="#555"/><path d="M630.800 70a3.300 3.300 0 0 0 0 6.600h0.700v-6.600z" fill="#555"/><path d="M631 70h1.300v11.700h-1.300zM634 70h1.300v11.700h-1.300z" fill="#555"/><rect x="430" y="102" width="14" height="1" fill="#666666"/><rect x="452" y="102" width="14" height="1" fill="#555"/><rect x="474" y="102" width="14" height="1" fill="#666666"/><rect x="496" y="102" width="14" height="1" fill="#666666"/><rect x="533" y="102" width="8" height="1" fill="#666666"/><rect x="430" y="105" width="10" height="1" fill="#666666"/><rect x="454.5" y="105" width="9.0" height="1" fill="#555"/><rect x="478" y="105" width="10" height="1" fill="#666666"/><rect x="496" y="105" width="14" height="1" fill="#666666"/><rect x="533" y="105" width="6.5" height="1" fill="#666666"/><rect x="430" y="108" width="14" height="1" fill="#666666"/><rect x="452" y="108" width="14" height="1" fill="#555"/><rect x="474" y="108" width="14" height="1" fill="#666666"/><rect x="496" y="108" width="14" height="1" fill="#666666"/><rect x="533" y="108" width="8" height="1" fill="#666666"/><rect x="430" y="111" width="10" height="1" fill="#666666"/><rect x="454.5" y="111" width="9.0" height="1" fill="#555"/><rect x="478" y="111" width="10" height="1" fill="#666666"/><rect x="496" y="111" width="14" height="1" fill="#666666"/><rect x="533" y="111" width="6.5" height="1" fill="#666666"/><path d="M529.500 100v14" stroke="#3b72b9" stroke-width="1.300"/><path d="M527 102.600l2.500-2.700 2.500 2.700M527 111.400l2.500 2.700 2.500-2.700" fill="none" stroke="#3b72b9" stroke-width="1.300"/><path d="M546 106h5.2l-2.6 3.100z" fill="#666"/><path d="M570.500 106.300l4.800-6 6.700 6.500-5.300 5z" fill="#fff" stroke="#666" stroke-width="1"/><path d="M576.500 102.500v-2a1.600 1.600 0 0 0-3.200 0v1.500" fill="none" stroke="#666" stroke-width="1"/><path d="M581.200 103.300c2.300 1 3 3.200 2 6-0.400-2-1.400-3-2.800-3.600z" fill="#3b72b9"/><rect x="568.500" y="112.500" width="15" height="2.500" fill="#fff" stroke="#888" stroke-width="1"/><path d="M590 106h5.2l-2.6 3.100z" fill="#666"/><rect x="603" y="100" width="1" height="1" fill="#777"/><rect x="603" y="105" width="1" height="1" fill="#777"/><rect x="603" y="110" width="1" height="1" fill="#777"/><rect x="605" y="100" width="1" height="1" fill="#777"/><rect x="605" y="105" width="1" height="1" fill="#777"/><rect x="605" y="110" width="1" height="1" fill="#777"/><rect x="607" y="100" width="1" height="1" fill="#777"/><rect x="607" y="105" width="1" height="1" fill="#777"/><rect x="607" y="110" width="1" height="1" fill="#777"/><rect x="609" y="100" width="1" height="1" fill="#777"/><rect x="609" y="105" width="1" height="1" fill="#777"/><rect x="609" y="110" width="1" height="1" fill="#777"/><rect x="611" y="100" width="1" height="1" fill="#777"/><rect x="611" y="105" width="1" height="1" fill="#777"/><rect x="611" y="110" width="1" height="1" fill="#777"/><rect x="613" y="100" width="1" height="1" fill="#777"/><rect x="613" y="105" width="1" height="1" fill="#777"/><rect x="613" y="110" width="1" height="1" fill="#777"/><rect x="615" y="100" width="1" height="1" fill="#777"/><rect x="615" y="105" width="1" height="1" fill="#777"/><rect x="615" y="110" width="1" height="1" fill="#777"/><rect x="603" y="100" width="1" height="1" fill="#777"/><rect x="609" y="100" width="1" height="1" fill="#777"/><rect x="615" y="100" width="1" height="1" fill="#777"/><rect x="603" y="102" width="1" height="1" fill="#777"/><rect x="609" y="102" width="1" height="1" fill="#777"/><rect x="615" y="102" width="1" height="1" fill="#777"/><rect x="603" y="104" width="1" height="1" fill="#777"/><rect x="609" y="104" width="1" height="1" fill="#777"/><rect x="615" y="104" width="1" height="1" fill="#777"/><rect x="603" y="106" width="1" height="1" fill="#777"/><rect x="609" y="106" width="1" height="1" fill="#777"/><rect x="615" y="106" width="1" height="1" fill="#777"/><rect x="603" y="108" width="1" height="1" fill="#777"/><rect x="609" y="108" width="1" height="1" fill="#777"/><rect x="615" y="108" width="1" height="1" fill="#777"/><rect x="603" y="110" width="1" height="1" fill="#777"/><rect x="609" y="110" width="1" height="1" fill="#777"/><rect x="615" y="110" width="1" height="1" fill="#777"/><rect x="603" y="112" width="13" height="1" fill="#444"/><path d="M624 106h5.2l-2.6 3.100z" fill="#666"/><path d="M1450.700 72.300h5.200l-2.600-3.100z" fill="#c6c6c6"/><path d="M1450.7 90h5.2l-2.6 3.100z" fill="#666"/><rect x="1451" y="107" width="5" height="1" fill="#666666"/><path d="M1450.9 109.5h5.2l-2.6 3.100z" fill="#666"/><path d="M807.4 70.05000000000001H812V88.3" fill="none" stroke="#1f5c99" stroke-width="1.5"/><path d="M836.700 88.300L846 69.600L855.300 88.300M840 81.800H852" fill="none" stroke="#1f5c99" stroke-width="1.500"/><path d="M866 75.500A6.500 6.500 0 1 0 866 88" fill="none" stroke="#1f5c99" stroke-width="1.500" clip-path="url(#c1)"/><path d="M878.2 76.65H882V89.2" fill="none" stroke="#1f5c99" stroke-width="1.3"/><rect x="888.3" y="87.8" width="1.4" height="1.4" fill="#1f5c99"/><path d="M894.7 76.65H898.5V89.2" fill="none" stroke="#1f5c99" stroke-width="1.3"/><path d="M917.500 89.200L923.800 76.200L930.100 89.200M919.800 84.700H927.800" fill="none" stroke="#1f5c99" stroke-width="1.300"/><path d="M939 80.200A4.700 4.700 0 1 0 939 89" fill="none" stroke="#1f5c99" stroke-width="1.300" clip-path="url(#c2)"/><path d="M949.4 76.15H953V88.3" fill="none" stroke="#1f5c99" stroke-width="1.3"/><path d="M965.4 76.15H969V88.3" fill="none" stroke="#1f5c99" stroke-width="1.3"/><path d="M981.4 76.15H985V88.3" fill="none" stroke="#1f5c99" stroke-width="1.3"/><rect x="960.3" y="86.89999999999999" width="1.4" height="1.4" fill="#1f5c99"/><rect x="976.3" y="86.89999999999999" width="1.4" height="1.4" fill="#1f5c99"/><path d="M1001.300 88.300L1005.300 80.300" stroke="#1f5c99" stroke-width="1.400"/><path d="M1020.0999999999999 77.35000000000001H1023.3V88" fill="none" stroke="#3a78b8" stroke-width="1.2"/><path d="M1033.8 77.35000000000001H1037V88" fill="none" stroke="#3a78b8" stroke-width="1.2"/><path d="M1047.2 77.35000000000001H1050.4V88" fill="none" stroke="#3a78b8" stroke-width="1.2"/><path d="M1060.3999999999999 77.35000000000001H1063.6V88" fill="none" stroke="#3a78b8" stroke-width="1.2"/><rect x="1029.35" y="86.7" width="1.3" height="1.3" fill="#3a78b8"/><rect x="1043.05" y="86.7" width="1.3" height="1.3" fill="#3a78b8"/><rect x="1056.35" y="86.7" width="1.3" height="1.3" fill="#3a78b8"/><path d="M1076 88L1078 83.600" stroke="#3a78b8" stroke-width="1.300"/><path d="M1477 66.500l1.300-4.300h3.200l1 3.300h2l1-3.300h3.200l1.300 4.300 0.800 6.800h-5.300v-3.600h-3.200v3.600h-5.300z" fill="#555"/><path d="M1478.500 68.500v4M1488.500 68.500v4" stroke="#fdfdfd" stroke-width="0.800"/><path d="M1528.2 67h5.2l-2.6 3.100z" fill="#666"/><path d="M1476.800 93.500v2h3" fill="none" stroke="#3b72b9" stroke-width="1"/><path d="M1478.600 94l1.600 1.500-1.600 1.500" fill="none" stroke="#3b72b9" stroke-width="1"/><path d="M1480.500 107v11.400l2.700-2.500 2 4.300 1.600-0.800-2-4.200h3.600z" fill="#fff" stroke="#555" stroke-width="1"/><path d="M1529 113.2h5.2l-2.6 3.100z" fill="#666"/></svg>
<div class="r" style="left:0px;top:837px;width:1584px;height:23px;background:#2b579a;"></div>
<div class="t" style="left:8px;top:841px;font-size:11.8px;line-height:15px;color:#fff;transform:scaleX(0.8674);transform-origin:0 50%;">PAGE 4 OF 41</div>
<div class="t" style="left:95px;top:841px;font-size:11.8px;line-height:15px;color:#fff;transform:scaleX(0.9163);transform-origin:0 50%;">4938 WORDS</div>
<svg class="r" style="left:182px;top:840px;" width="17" height="15" viewBox="0 0 17 15"><path d="M1.400 1.300H5.500Q7.500 1.500 7.500 4V13.400M1.400 1.300V11.500H5.500Q7 11.700 7.500 13.400M7.500 4Q7.500 1.500 9.500 1.300H14.100V3.200M7.500 13.400Q8 11.700 9.500 11.500H14.100" fill="none" stroke="#fff" stroke-width="1.100"/><path d="M10.400 4.300L14.800 9.700M14.800 4.300L10.400 9.700" stroke="#fff" stroke-width="1.500"/></svg>
<div class="t" style="left:214px;top:841px;font-size:11.8px;line-height:15px;color:#fff;transform:scaleX(0.8264);transform-origin:0 50%;">ENGLISH (UNITED STATES)</div>
<svg class="r" style="left:1297px;top:840px;" width="16" height="15" viewBox="0 0 16 15"><path d="M7.5 2.300C5.600 0.900 2.800 0.900 0.800 1.800V11.800C2.800 10.900 5.600 10.900 7.500 12.300C9.400 10.900 12.200 10.900 14.200 11.800V1.800C12.200 0.900 9.400 0.900 7.500 2.300Z" fill="none" stroke="#fff" stroke-width="1.100"/><path d="M7.500 2.300V13.800" stroke="#fff" stroke-width="1.100"/><path d="M2.500 3.700h3.500M2.500 5.700h3.500M2.500 7.700h3.500M2.500 9.700h3.500M9 3.700h3.500M9 5.700h3.500M9 7.700h3.500M9 9.700h3.500" stroke="#fff" stroke-width="0.900"/></svg>
<div class="r" style="left:1324px;top:837px;width:38px;height:23px;background:#1e4580;"></div>
<svg class="r" style="left:1336px;top:841px;" width="15" height="14" viewBox="0 0 15 14"><rect x="0.5" y="0.5" width="13" height="12" fill="#fff"/><path d="M2.500 3h9.500M2.500 5.500h9.500M2.500 8h9.500M2.500 10.500h9.500" stroke="#1e4580" stroke-width="1"/></svg>
<svg class="r" style="left:1373px;top:841px;" width="17" height="15" viewBox="0 0 17 15"><path d="M1 0.500h9.500v5M1 0.500v10.500h5" fill="none" stroke="#fff" stroke-width="1.2"/><path d="M3 3h5.500M3 5.200h5.500M3 7.400h3.500" stroke="#fff" stroke-width="1"/><circle cx="11" cy="9.500" r="3.800" fill="#fff"/><path d="M9 8.500c1.500 0.500 1.500 2 3 2.500" fill="none" stroke="#2b579a" stroke-width="1.1"/></svg>
<div class="r" style="left:1405px;top:847px;width:6px;height:2px;background:#fff;"></div>
<div class="r" style="left:1415px;top:847px;width:100px;height:1px;background:#fff;"></div>
<div class="r" style="left:1465px;top:844px;width:1px;height:7px;background:#fff;"></div>
<div class="r" style="left:1442px;top:842px;width:4px;height:12px;background:#fff;"></div>
<div class="r" style="left:1519px;top:847px;width:9px;height:2px;background:#fff;"></div>
<div class="r" style="left:1522.5px;top:843.5px;width:2px;height:9px;background:#fff;"></div>
<div class="t" style="left:1542px;top:840px;font-size:12px;line-height:16px;color:#fff;letter-spacing:-0.839px;">60%</div>
<div id="win"></div>
</div>
</body></html>
